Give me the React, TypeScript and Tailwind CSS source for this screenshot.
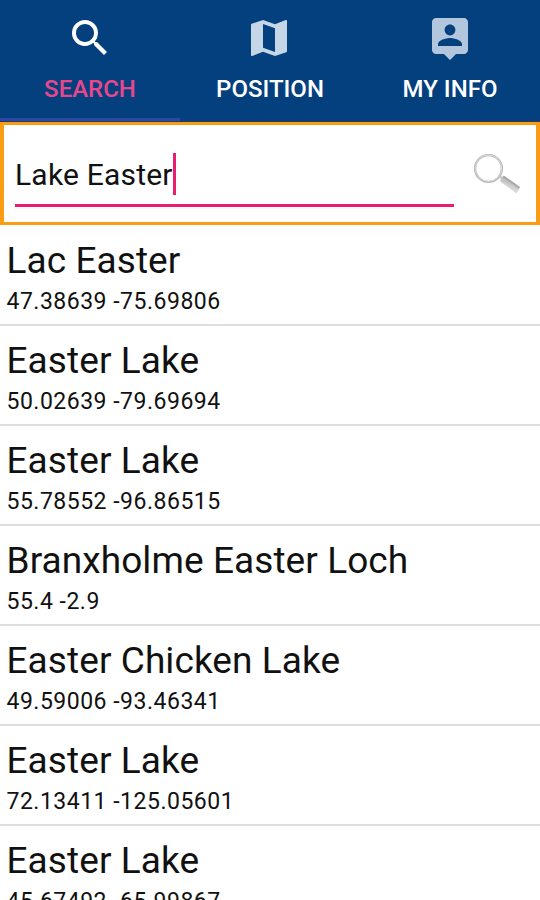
import React, { useState } from 'react';
import { MdMap, MdSearch } from 'react-icons/md';

type TabId = 'search' | 'position' | 'info';

interface Place {
  name: string;
  coords: string;
}

const PLACES: Place[] = [
  { name: 'Lac Easter', coords: '47.38639 -75.69806' },
  { name: 'Easter Lake', coords: '50.02639 -79.69694' },
  { name: 'Easter Lake', coords: '55.78552 -96.86515' },
  { name: 'Branxholme Easter Loch', coords: '55.4 -2.9' },
  { name: 'Easter Chicken Lake', coords: '49.59006 -93.46341' },
  { name: 'Easter Lake', coords: '72.13411 -125.05601' },
  { name: 'Easter Lake', coords: '45.67492 -65.99867' },
];

const PersonPin: React.FC = () => (
  <svg viewBox="0 0 24 24" className="size-12 fill-[#b2c6de]">
    <path d="M19 2H5c-1.11 0-2 .9-2 2v14c0 1.1.89 2 2 2h4l3 3 3-3h4c1.1 0 2-.9 2-2V4c0-1.1-.9-2-2-2zm-7 3.3c1.49 0 2.7 1.21 2.7 2.7 0 1.49-1.21 2.7-2.7 2.7-1.49 0-2.7-1.21-2.7-2.7 0-1.49 1.21-2.7 2.7-2.7zM18 16H6v-.9c0-2 4-3.1 6-3.1s6 1.1 6 3.1v.9z" />
  </svg>
);

const Magnifier: React.FC = () => (
  <svg viewBox="0 0 48 42" className="h-[42px] w-12" fill="none">
    <defs>
      <linearGradient id="handle" x1="0.3" y1="0.9" x2="0.7" y2="0.1">
        <stop offset="0.3" stopColor="#dadada" />
        <stop offset="0.75" stopColor="#b4b4b4" />
      </linearGradient>
    </defs>
    <circle cx="15.5" cy="15.5" r="13.4" stroke="#bababa" strokeWidth="2.4" />
    <circle cx="15.5" cy="15.2" r="13.2" stroke="#dedede" strokeWidth="0.8" />
    <path d="M26 23l4 3" stroke="#c4c4c4" strokeWidth="2.5" />
    <path d="M30.5 22.5L47 34.2 43.5 40.6 26.8 28.2z" fill="url(#handle)" />
    <path d="M30.5 23.5L46.3 34.8" stroke="#a6a6a6" strokeWidth="1.8" />
  </svg>
);

const TABS: { id: TabId; label: string; icon: React.ReactNode }[] = [
  { id: 'search', label: 'SEARCH', icon: <MdSearch className="size-12 text-white" /> },
  { id: 'position', label: 'POSITION', icon: <MdMap className="relative -left-px size-12 text-[#c5d6e6]" /> },
  { id: 'info', label: 'MY INFO', icon: <PersonPin /> },
];

const App: React.FC = () => {
  const [tab, setTab] = useState<TabId>('search');

  return (
    <div className="flex h-[900px] w-[540px] flex-col overflow-hidden bg-white font-[Roboto,sans-serif] text-[#111]">
      <nav className="grid h-[122px] shrink-0 grid-cols-3 border-b border-[#2b3a5c] bg-[#043f7e]">
        {TABS.map((t) => (
          <button
            key={t.id}
            onClick={() => setTab(t.id)}
            className={`flex flex-col items-center border-b-3 pt-3.5 text-[24px] leading-7 font-medium
              ${tab === t.id ? 'border-[#2a48a4] text-[#e9478c]' : 'border-transparent text-white'}`}
          >
            {t.icon}
            <span className="mt-[13px]">{t.label}</span>
          </button>
        ))}
      </nav>

      <div className="mb-px flex h-[103px] shrink-0 items-start border-4 border-t-3 border-b-3 border-[#fb9d14] pl-[11px]">
        <div className="flex h-[82px] w-[439px] items-end border-b-3 border-[#e91e6f] pb-[9px]">
          <span className="relative top-px text-[30px] leading-[42px] tracking-[0.2px]">Lake Easter</span>
          <span className="h-[42px] w-[3px] bg-[#e91e6f]" />
        </div>
        <div className="mt-7 ml-[19px]">
          <Magnifier />
        </div>
      </div>

      <ul>
        {PLACES.map((p, i) => (
          <li key={i} className="h-[100px] border-b-2 border-[#dfdfdf] pt-3 pl-[6.5px]">
            <p className="text-[37px] leading-[46px] tracking-[0.08px]">{p.name}</p>
            <p className="mt-0.5 text-[23px] leading-8 tracking-[0.5px]">{p.coords}</p>
          </li>
        ))}
      </ul>
    </div>
  );
};

export default App;
